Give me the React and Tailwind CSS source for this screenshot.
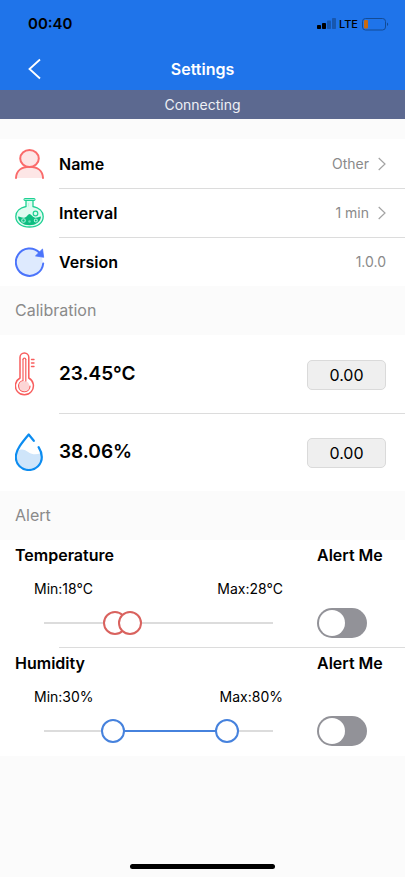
import { useState } from "react";

function PersonIcon() {
  return (
    <svg viewBox="0 0 30 30" className="h-[30px] w-[30px]" stroke="#fa6b6b" strokeWidth="2" strokeLinecap="round" aria-hidden="true">
      <path d="M1 29C1.300 22 6.500 17.800 14.500 17.800S27.700 22 28 29" fill="#fde6e6" />
      <ellipse cx="14.500" cy="9.500" rx="9.300" ry="8.500" fill="#fde6e6" />
    </svg>
  );
}

function FlaskIcon() {
  return (
    <svg viewBox="0 0 30 30" className="h-[30px] w-[30px]" fill="none" aria-hidden="true">
      <path d="M11 2v6.500C5 9.700.8 13.500.8 18.500.8 25 6.500 29 14.500 29s13.700-4 13.700-10.500c0-5-4.200-8.800-10.200-10V2z" fill="#e0fbf1" stroke="#1fd193" strokeWidth="1.300" />
      <rect x="9" y="0.500" width="11" height="2" rx="0.500" fill="#a5f0d5" stroke="#1fd193" strokeWidth="1" />
      <path d="M3 18.500c3 .5 4.500 1.800 7 1 2-.6 3-3.500 4.500-3.500s3 2.800 5 3.500c2 .6 4-.5 6.500-1-.2 5-5 8.800-11.500 8.800S3.200 23.500 3 18.500z" fill="#0dbd80" />
      <circle cx="20.500" cy="15.500" r="2.300" fill="#e0fbf1" stroke="#1fd193" strokeWidth="1.200" />
      <circle cx="8.500" cy="22.500" r="1.800" stroke="#a9f2d9" strokeWidth="1.100" />
      <circle cx="20.800" cy="22.500" r="1.500" stroke="#a9f2d9" strokeWidth="1.100" />
      <circle cx="14.500" cy="23.500" r="1.300" fill="#63dcb3" />
      <path d="M13.500 5v3.500" stroke="#c1f5e2" />
    </svg>
  );
}

function RefreshIcon() {
  return (
    <svg viewBox="0 0 30 30" className="h-[30px] w-[30px]" aria-hidden="true">
      <circle cx="14.500" cy="15" r="13.200" fill="#deeafe" />
      <path d="M28.200 16.500A13.700 13.700 0 1 1 24.500 5.700" fill="none" stroke="#4b74fb" strokeWidth="2" strokeLinecap="round" />
      <path d="M27.500 2l1.200 8.300-8.200-1.400z" fill="#4b74fb" stroke="#4b74fb" strokeWidth="0.800" strokeLinejoin="round" />
    </svg>
  );
}

function ThermometerIcon() {
  return (
    <svg viewBox="0 0 30 44" className="h-11 w-[30px]" fill="none" stroke="#f85e5e" strokeWidth="1.500" strokeLinecap="round" aria-hidden="true">
      <path d="M5 26V5.300a4.400 4.400 0 0 1 8.800 0V26a9 9 0 1 1-8.800 0z" />
      <circle cx="9.400" cy="34" r="5" fill="#fcd5d5" stroke="none" />
      <path d="M8 7.500V28.500a5.700 5.700 0 1 0 7 5.500M10.800 7.500V29" strokeWidth="1.200" />
      <path d="M8 7.500a1.400 1.400 0 0 1 2.800 0" strokeWidth="1.200" />
      <path d="M16.500 7.500h2.500M16.500 11h2.500M16.500 14.500h2.500" strokeWidth="1.400" />
    </svg>
  );
}

function DropIcon() {
  return (
    <svg viewBox="0.500 0 30 38" className="h-[38px] w-[30px]" fill="none" aria-hidden="true">
      <path d="M2.500 18.500c4.500-3.500 8-1.500 11.500.7 4 2.600 8 2.500 12.500.8 1 9-4.500 16-12.500 16S1 29 2.500 18.500z" fill="#cfe5fa" />
      <path d="M19.300 7.800L14.200 1.500C7.500 9.500 1.300 17 1.300 24a13 13 0 0 0 26 0c0-3.400-1.100-6.500-3.200-9.800" stroke="#0c8cf0" strokeWidth="2.200" strokeLinecap="round" strokeLinejoin="round" />
    </svg>
  );
}

function StatusBar() {
  return (
    <div className="flex h-12 items-center justify-between pr-4 pl-7 text-black">
      <span className="text-[15px] font-semibold">00:40</span>
      <div className="flex items-center">
        <svg viewBox="0 0 19 12" className="mr-[3px] h-3 w-[19px]" aria-hidden="true">
          <rect x="0" y="7" width="4" height="4" rx="0.800" />
          <rect x="5" y="5" width="4" height="6" rx="0.800" />
          <rect x="10" y="2.500" width="4" height="8.500" rx="0.800" opacity="0.250" />
          <rect x="15" y="0" width="4" height="11" rx="0.800" opacity="0.250" />
        </svg>
        <span className="text-[11px] font-medium">LTE</span>
        <svg viewBox="0 0 27 13" className="ml-1 h-[13px] w-[27px]" aria-hidden="true">
          <rect x="0.500" y="0.500" width="23" height="11.500" rx="3" fill="none" stroke="#134b95" />
          <rect x="2" y="2" width="4" height="8.500" rx="1" fill="#c96a10" />
          <path d="M25 4.500c1.600.5 1.600 3 0 3.500z" fill="#134b95" />
        </svg>
      </div>
    </div>
  );
}

function Chevron() {
  return (
    <svg viewBox="0 0 8 14" className="ml-[9px] h-[14px] w-2" fill="none" stroke="#a3a3a3" strokeWidth="1.200" aria-hidden="true">
      <path d="M.7 1l6.300 6L.7 13" />
    </svg>
  );
}

function SettingRow({ icon, label, value, link, first }) {
  const Row = link ? "button" : "div";
  return (
    <Row className="flex w-full items-stretch pl-[15px] text-left">
      <span className="flex w-11 items-center">{icon}</span>
      <span className={`flex h-[49px] flex-1 items-center border-t pr-[19px] ${first ? "border-transparent" : "border-[#dcdcdc]"}`}>
        <span className="flex-1 text-base font-semibold">{label}</span>
        <span className="text-sm text-[#8a8a8a]">{value}</span>
        {link && <Chevron />}
      </span>
    </Row>
  );
}

function CalibrationRow({ icon, reading, name, first }) {
  const [offset, setOffset] = useState("0.00");
  return (
    <div className="flex items-stretch pl-[15px]">
      <span className="flex w-11 items-center">{icon}</span>
      <div className={`flex h-[78px] flex-1 items-center border-t pr-[19px] ${first ? "border-transparent" : "border-[#dcdcdc]"}`}>
        <span className="flex-1 text-[19px] font-semibold">{reading}</span>
        <input
          type="text"
          inputMode="decimal"
          aria-label={name}
          value={offset}
          onChange={(e) => setOffset(e.target.value)}
          className="h-[30px] w-[79px] rounded-[5px] border border-[#dadada] bg-[#efefef] text-center text-base"
        />
      </div>
    </div>
  );
}

const THUMB =
  "pointer-events-none absolute inset-0 m-0 h-6 w-full appearance-none bg-transparent [&::-webkit-slider-thumb]:pointer-events-auto [&::-webkit-slider-thumb]:h-6 [&::-webkit-slider-thumb]:w-6 [&::-webkit-slider-thumb]:appearance-none [&::-webkit-slider-thumb]:rounded-full [&::-webkit-slider-thumb]:border-2 [&::-webkit-slider-thumb]:bg-white";

function AlertBlock({ title, unit, min, max, low, high, thumb, bar }) {
  const [range, setRange] = useState([low, high]);
  const [on, setOn] = useState(false);
  const pct = (v) => ((v - min) / (max - min)) * 100;
  return (
    <section className="flex pr-[22px] pl-[15px]">
      <div className="flex-1">
        <h3 className="pt-[3px] text-base leading-6 font-semibold">{title}</h3>
        <div className="mt-3 flex justify-between pr-[34px] pl-[19px] text-sm leading-5">
          <span>Min:{range[0]}{unit}</span>
          <span>Max:{range[1]}{unit}</span>
        </div>
        <div className="relative mt-3 mr-8 ml-[17px] flex h-6 items-center px-3">
          <div className="h-0.5 w-full bg-[#dcdcdc]">
            <div className={`h-full ${bar}`} style={{ marginLeft: `${pct(range[0])}%`, width: `${pct(range[1]) - pct(range[0])}%` }} />
          </div>
          <input type="range" aria-label={`${title} minimum`} min={min} max={max} value={range[0]}
            onChange={(e) => setRange([Math.min(+e.target.value, range[1]), range[1]])} className={`${THUMB} ${thumb}`} />
          <input type="range" aria-label={`${title} maximum`} min={min} max={max} value={range[1]}
            onChange={(e) => setRange([range[0], Math.max(+e.target.value, range[0])])} className={`${THUMB} ${thumb}`} />
        </div>
      </div>
      <label className="flex w-[66px] flex-col">
        <span className="pt-[3px] text-base leading-6 font-semibold whitespace-nowrap">Alert Me</span>
        <input
          type="checkbox"
          role="switch"
          aria-label={`${title} alert`}
          checked={on}
          onChange={(e) => setOn(e.target.checked)}
          className="mt-[41px] h-[30px] w-[50px] appearance-none rounded-full bg-[#929298] p-0.5 before:block before:h-[26px] before:w-[26px] before:rounded-full before:bg-white checked:bg-green-500 checked:before:translate-x-5"
        />
      </label>
    </section>
  );
}

export default function App() {
  return (
    <div className="flex min-h-screen flex-col bg-[#fbfbfb] font-[Inter,'Liberation_Sans',sans-serif] text-black">
      <header className="bg-[#1f74ea]">
        <StatusBar />
        <div className="grid h-[42px] grid-cols-[1fr_auto_1fr] items-center px-7 text-white">
          <button aria-label="Back" className="justify-self-start">
            <svg viewBox="0 0 13 22" className="h-[22px] w-[13px]" fill="none" stroke="currentColor" strokeWidth="1.800" aria-hidden="true">
              <path d="M12 1.500L1.500 11 12 20.500" />
            </svg>
          </button>
          <h1 className="text-base font-semibold">Settings</h1>
        </div>
      </header>
      <p className="h-[29px] bg-[#5c6990] text-center text-sm leading-[30px] text-[#eef0f5]">Connecting</p>

      <main className="flex-1 pt-5">
        <div className="bg-white">
          <SettingRow icon={<PersonIcon />} label="Name" value="Other" link first />
          <SettingRow icon={<FlaskIcon />} label="Interval" value="1 min" link />
          <SettingRow icon={<RefreshIcon />} label="Version" value="1.0.0" />
        </div>
        <h2 className="px-[15px] text-base leading-[49px] text-[#8a8a8a]">Calibration</h2>
        <div className="bg-white">
          <CalibrationRow icon={<ThermometerIcon />} reading="23.45°C" name="Temperature offset" first />
          <CalibrationRow icon={<DropIcon />} reading="38.06%" name="Humidity offset" />
        </div>
        <h2 className="px-[15px] text-base leading-[49px] text-[#8a8a8a]">Alert</h2>
        <div className="bg-white pb-[10px]">
          <AlertBlock title="Temperature" unit="°C" min={-30} max={125} low={18} high={28}
            thumb="[&::-webkit-slider-thumb]:border-[#d9625e]" bar="bg-[#d9625e]" />
          <div className="mt-[9px] ml-[59px] h-px bg-[#dcdcdc]" />
          <AlertBlock title="Humidity" unit="%" min={0} max={100} low={30} high={80}
            thumb="[&::-webkit-slider-thumb]:border-[#4682dd]" bar="bg-[#4682dd]" />
        </div>
      </main>
      <div className="mx-auto mb-2 h-[5px] w-[145px] rounded-full bg-black" />
    </div>
  );
}
